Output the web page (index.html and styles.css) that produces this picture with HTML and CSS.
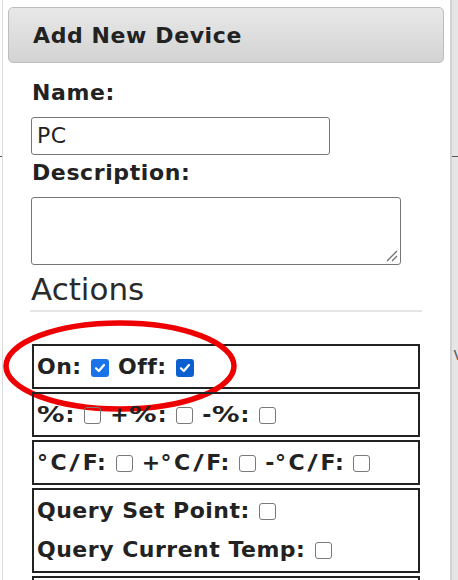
FILE: index.html
```html
<!DOCTYPE html>
<html>
<head>
<meta charset="utf-8">
<link rel="stylesheet" href="styles.css">
</head>
<body>
<div class="page">
  <div class="gutter-left"></div>
  <div class="dialog">
    <div class="header">Add New Device</div>
    <div class="form">
      <div class="label">Name:</div>
      <div class="input">PC</div>
      <div class="label">Description:</div>
      <div class="textarea">
        <svg class="grip" width="12" height="12" viewBox="0 0 12 12"><path d="M1 11 L11 1 M6 11 L11 6" stroke="#6f6f6f" stroke-width="1.3" fill="none"/></svg>
      </div>
      <div class="section-title">Actions</div>
      <div class="rule"></div>
      <div class="actions">
        <div class="box annotated">
          <div class="line">On: <span class="cb on"><svg viewBox="0 0 16 16" width="16" height="16"><path d="M4 8.3 L6.8 11 L12 5" stroke="#fff" stroke-width="2.2" fill="none" stroke-linecap="round" stroke-linejoin="round"/></svg></span> Off: <span class="cb on dark"><svg viewBox="0 0 16 16" width="16" height="16"><path d="M4 8.3 L6.8 11 L12 5" stroke="#fff" stroke-width="2.2" fill="none" stroke-linecap="round" stroke-linejoin="round"/></svg></span></div>
          <svg class="ellipse" width="240" height="96" viewBox="0 0 240 96"><ellipse cx="118" cy="46" rx="114" ry="43" fill="none" stroke="#ee0000" stroke-width="5.5"/></svg>
        </div>
        <div class="box"><div class="line"><span class="pc">%</span>: <span class="cb"></span> +<span class="pc">%</span>: <span class="cb"></span> -<span class="pc">%</span>: <span class="cb"></span></div></div>
        <div class="box"><div class="line"><span class="dg">°</span>C<span class="sl">/</span>F: <span class="cb"></span> +<span class="dg">°</span>C<span class="sl">/</span>F: <span class="cb"></span> -<span class="dg">°</span>C<span class="sl">/</span>F: <span class="cb"></span></div></div>
        <div class="box tall"><div class="line">Query Set Point: <span class="cb"></span></div><div class="line">Query Current Temp: <span class="cb"></span></div></div>
        <div class="box"><div class="line">&nbsp;</div></div>
      </div>
    </div>
  </div>
  <div class="gutter-right"><span class="behind">v</span></div>
</div>
</body>
</html>
```

FILE: styles.css
```css
html, body {
  margin: 0;
  padding: 0;
  height: 100%;
  overflow: hidden;
}
body {
  font-family: "DejaVu Sans", Verdana, sans-serif;
  color: #222;
  background:
    linear-gradient(#555, #555) 0 156px / 100% 1px no-repeat,
    linear-gradient(to right, #fff 0 450px, #e6e6e6 450px);
}
.page {
  display: flex;
  height: 580px;
}
.gutter-left {
  width: 2px;
  flex: none;
}
.dialog {
  flex: none;
  width: 450px;
  box-sizing: border-box;
  background: #fff;
  border-left: 1px solid #dadada;
  border-right: 2px solid #d2d2d2;
  padding: 7px 6px 0 5px;
}
.gutter-right {
  flex: 1;
  padding-top: 343px;
}
.behind {
  display: block;
  font-size: 18px;
  color: #666;
  margin-left: 1px;
}
.header {
  height: 56px;
  box-sizing: border-box;
  border: 1px solid #bdbdbd;
  border-radius: 5px;
  background: linear-gradient(#e8e8e8, #d3d3d3);
  font-weight: bold;
  font-size: 22px;
  letter-spacing: 0.6px;
  line-height: 53px;
  padding-top: 1px;
  padding-left: 24px;
}
.form {
  padding: 0 22px 0 23px;
}
.label {
  font-weight: bold;
  font-size: 22px;
  letter-spacing: 0.6px;
  line-height: 26px;
  margin-left: 1px;
}
.header + .form .label:first-child { margin-top: 17px; }
.input + .label { margin-top: 5px; }
.input {
  width: 299px;
  height: 38px;
  box-sizing: border-box;
  border: 1px solid #767676;
  border-radius: 3px;
  font-size: 22px;
  letter-spacing: 0.5px;
  line-height: 36px;
  padding-left: 5px;
  margin-top: 11px;
}
.textarea {
  position: relative;
  width: 370px;
  height: 68px;
  box-sizing: border-box;
  border: 1px solid #767676;
  border-radius: 3px;
  margin-top: 11px;
}
.grip {
  position: absolute;
  right: 2px;
  bottom: 2px;
}
.section-title {
  font-size: 31px;
  line-height: 36px;
  margin-top: 6px;
  color: #2a2a2a;
}
.rule {
  height: 2px;
  background: #e5e5e5;
  width: 392px;
  margin-left: -1px;
  margin-top: 3px;
}
.actions {
  margin-top: 32px;
  margin-left: 1px;
  display: flex;
  flex-direction: column;
  gap: 3px;
  width: 388px;
}
.box {
  border: 2px solid #222;
  padding: 1px 3px 1px 3px;
  position: relative;
}
.box.tall { padding-bottom: 2px; }
.line {
  font-weight: bold;
  font-size: 22px;
  letter-spacing: 0.5px;
  line-height: 39px;
  display: flex;
  align-items: center;
  white-space: pre;
}
.pc { display: inline-block; transform: scaleX(1.25); transform-origin: left center; margin-right: 6px; }
.sl { display: inline-block; padding: 0 3.5px; transform: scaleX(1.3); }
.dg { display: inline-block; margin-right: 2px; }
.cb {
  display: inline-block;
  flex: none;
  width: 17px;
  height: 17px;
  border: 1px solid #7a7a7a;
  border-radius: 3px;
  box-sizing: border-box;
  margin: 0 1px;
  position: relative;
  top: 1px;
}
.cb.on {
  width: 18px;
  height: 18px;
  border: none;
  background: #1a73e8;
}
.cb.on.dark { background: #0b5fd0; }
.cb svg { display: block; margin: 1px; }
.ellipse {
  position: absolute;
  left: -32px;
  top: -26.5px;
  pointer-events: none;
}
```
